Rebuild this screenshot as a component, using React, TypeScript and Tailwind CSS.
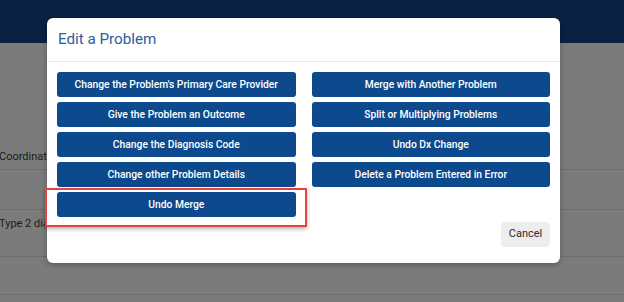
import React from "react";

const actions = [
  "Change the Problem's Primary Care Provider",
  "Merge with Another Problem",
  "Give the Problem an Outcome",
  "Split or Multiplying Problems",
  "Change the Diagnosis Code",
  "Undo Dx Change",
  "Change other Problem Details",
  "Delete a Problem Entered in Error",
  "Undo Merge",
];

export default function App() {
  return (
    <div
      className="relative w-[624px] h-[302px] overflow-hidden bg-[#7b7b7b]"
      style={{ fontFamily: "Roboto, 'Liberation Sans', sans-serif" }}
    >
      {/* Dimmed page behind the dialog */}
      <div className="h-[43px] bg-[#0b2143]" />
      <div className="flex flex-col text-[11px] text-[#1c1c1c]">
        <div className="h-[127px] border-b border-[#6c6c6c] flex items-end pb-[4px]">
          <span className="-ml-[1px]">Coordination</span>
        </div>
        <div className="h-[40px] border-b border-[#6c6c6c]" />
        <div className="h-[47px] border-b border-[#6c6c6c] pt-[6px]">
          <span className="-ml-[1px]">Type 2 diabetes</span>
        </div>
        <div className="h-[38px] border-b border-[#6c6c6c]" />
      </div>

      {/* Dialog */}
      <div className="absolute left-[47px] top-[18px] w-[513px] h-[245px] bg-white rounded-[6px] shadow-[0_2px_6px_rgba(0,0,0,0.25)] flex flex-col">
        <div className="h-[44px] flex items-center px-[11px] border-b border-[#e3e7ec]">
          <h2 className="text-[15.2px] text-[#2c5d9b] leading-none">Edit a Problem</h2>
        </div>
        <div className="flex flex-col px-[10px] pt-[10px]">
          <div className="grid grid-cols-2 gap-x-[16px] gap-y-[5px]">
            {actions.map((a) => (
              <button
                key={a}
                className="h-[25px] rounded-[3px] bg-[#0c4a8d] text-white text-[10.3px] font-medium"
              >
                {a}
              </button>
            ))}
          </div>
          <div className="flex justify-end mt-[5px]">
            <button className="w-[49px] h-[25px] rounded-[4px] bg-[#ededed] text-[#2b2b2b] text-[11px]">
              Cancel
            </button>
          </div>
        </div>
      </div>

      {/* Highlight around Undo Merge */}
      <div className="absolute left-[45px] top-[188px] w-[262px] h-[39px] border-2 border-[#e8413f] shadow-[0_2px_4px_rgba(0,0,0,0.3)]" />
    </div>
  );
}
